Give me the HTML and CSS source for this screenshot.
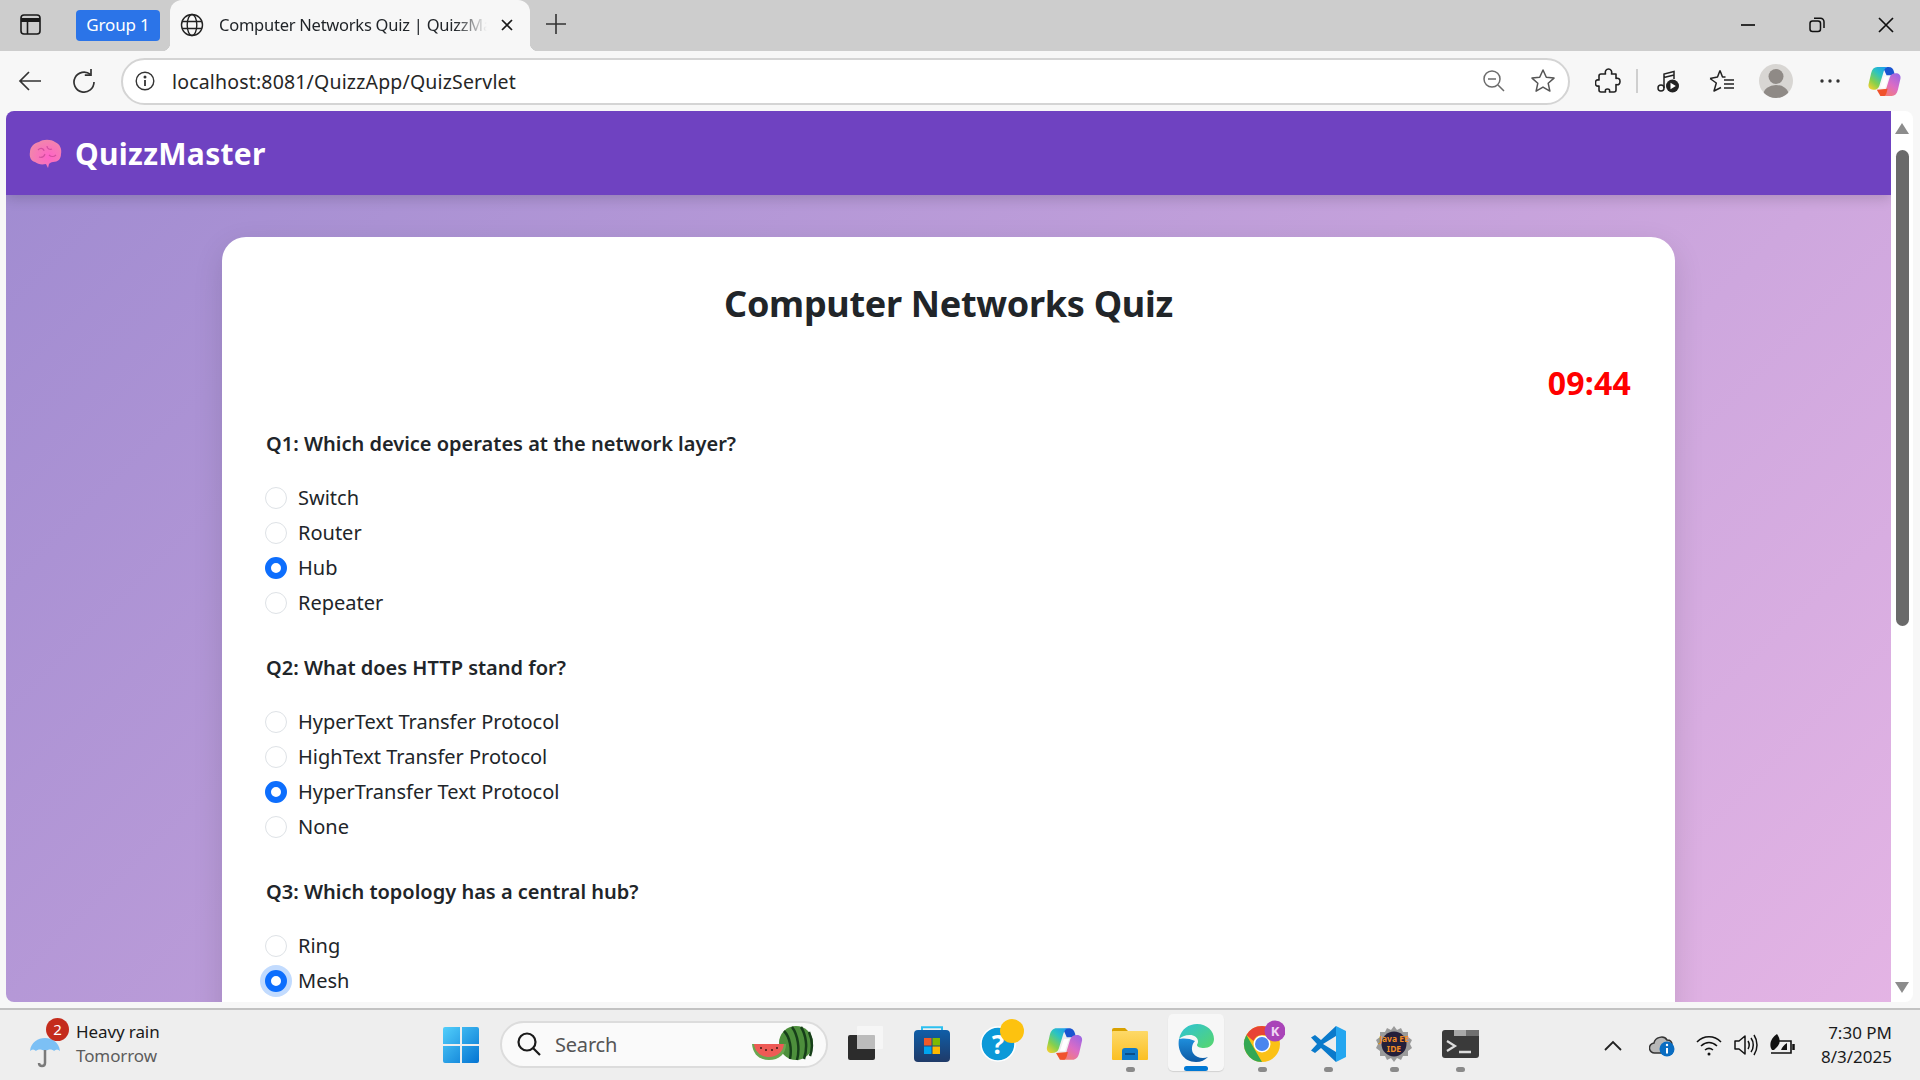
FILE: index.html
```html
<!DOCTYPE html>
<html lang="en">
<head>
    <meta charset="UTF-8">
    <title>Computer Networks Quiz | QuizzMaster</title>
    <link rel="stylesheet" href="styles.css">
</head>
<body>
    <svg width="0" height="0" class="defs">
        <defs>
            <linearGradient id="copilotA" x1=".85" y1="0" x2=".1" y2="1">
                <stop offset="0" stop-color="#1c9cf0"/><stop offset=".35" stop-color="#2cc4c0"/><stop offset=".7" stop-color="#86d04c"/><stop offset="1" stop-color="#f6d02e"/>
            </linearGradient>
            <linearGradient id="copilotB" x1=".9" y1="0" x2=".2" y2="1">
                <stop offset="0" stop-color="#9a66e6"/><stop offset=".5" stop-color="#dc6cc4"/><stop offset="1" stop-color="#f7806a"/>
            </linearGradient>
            <linearGradient id="edgeA" x1="0" y1="0" x2="1" y2="1">
                <stop offset="0" stop-color="#2dc3d8"/><stop offset="1" stop-color="#58d66b"/>
            </linearGradient>
            <linearGradient id="edgeB" x1="0" y1="0" x2="0" y2="1">
                <stop offset="0" stop-color="#1f8fdc"/><stop offset="1" stop-color="#0c59a4"/>
            </linearGradient>
            <linearGradient id="winLogo" x1="0" y1="0" x2="1" y2="1">
                <stop offset="0" stop-color="#52cffb"/><stop offset="1" stop-color="#0474d2"/>
            </linearGradient>
            <linearGradient id="storeBag" x1="0" y1="0" x2="0" y2="1">
                <stop offset="0" stop-color="#0f5ea8"/><stop offset="1" stop-color="#1f3a68"/>
            </linearGradient>
            <linearGradient id="folderFill" x1="0" y1="0" x2="0" y2="1">
                <stop offset="0" stop-color="#fdd968"/><stop offset="1" stop-color="#fbbf24"/>
            </linearGradient>
            <radialGradient id="brainFill" cx=".6" cy=".6" r=".7">
                <stop offset="0" stop-color="#ff62c8"/><stop offset="1" stop-color="#f08aa8"/>
            </radialGradient>
            <symbol id="copilot" viewBox="0 0 32 30">
                <path d="M15 2.500C16.500 1 18.500 1 20 1c3 0 4.500 2 5.200 4.500L26 9h-8z" fill="#1a55d0"/>
                <path d="M23 29H11c3 0 5-2 6-5l4-13c1-3 3-4 6-4s5 2 4.500 5L29 23c-1 4-3 6-6 6z" fill="url(#copilotB)"/>
                <path d="M8.500 23l3.500 6h4c1.500-1 2-3 2.500-5l.5-2z" fill="#f0522c"/>
                <path d="M9 1h11c-3 0-4 2-5 5l-4 13c-1 3-3 4-6 4s-5-2-4.500-5L3 7c1-4 3-6 6-6z" fill="url(#copilotA)"/>
                <path d="M15.500 10.500H20L16.500 21H12z" fill="#fff"/>
            </symbol>
        </defs>
    </svg>

    <div class="tabstrip">
        <div class="strip-slot sidebar-slot">
            <svg width="21" height="21" viewBox="0 0 21 21" fill="none" stroke="#1a1a1a" stroke-width="1.600"><rect x="1" y="1" width="19" height="19" rx="3"/><path d="M1 6h19" stroke-width="4"/><path d="M7.500 6v14"/></svg>
        </div>
        <div class="group-chip">Group 1</div>
        <div class="tab">
            <svg width="24" height="24" viewBox="0 0 24 24" fill="none" stroke="#222" stroke-width="1.400"><circle cx="12" cy="12" r="10.500"/><ellipse cx="12" cy="12" rx="4.800" ry="10.500"/><path d="M2 8.500h20M2 15.500h20"/></svg>
            <span class="tab-title">Computer Networks Quiz | QuizzMaster</span>
            <svg class="tab-close" width="14" height="14" viewBox="0 0 14 14" stroke="#1a1a1a" stroke-width="1.700"><path d="M2 2l10 10M12 2L2 12"/></svg>
        </div>
        <div class="strip-slot plus-slot">
            <svg width="22" height="22" viewBox="0 0 22 22" stroke="#333" stroke-width="1.600"><path d="M11 1v20M1 11h20"/></svg>
        </div>
        <div class="win-controls">
            <div class="win-btn"><svg width="16" height="16" viewBox="0 0 16 16" stroke="#111" stroke-width="1.700"><path d="M1 8h14"/></svg></div>
            <div class="win-btn"><svg width="16" height="16" viewBox="0 0 16 16" fill="none" stroke="#111" stroke-width="1.500"><rect x="1" y="4" width="10.500" height="10.500" rx="2.500"/><path d="M5 1.200h6.500a3.500 3.500 0 0 1 3.500 3.500V11"/></svg></div>
            <div class="win-btn"><svg width="16" height="16" viewBox="0 0 16 16" stroke="#111" stroke-width="1.700"><path d="M1 1l14 14M15 1L1 15"/></svg></div>
        </div>
    </div>

    <div class="toolbar">
        <div class="tool">
            <svg width="24" height="22" viewBox="0 0 24 22" fill="none" stroke="#333" stroke-width="1.700"><path d="M23 11H2M11 2l-9 9 9 9"/></svg>
        </div>
        <div class="tool">
            <svg width="24" height="26" viewBox="0 0 24 26" fill="none" stroke="#333" stroke-width="1.700"><path d="M18.500 6.500A10 10 0 1 0 22 14"/><path d="M19 1v6.200h-6.200"/></svg>
        </div>
        <div class="address">
            <svg width="20" height="20" viewBox="0 0 20 20" fill="none" stroke="#333" stroke-width="1.400"><circle cx="10" cy="10" r="8.800"/><path d="M10 9v6" stroke-width="1.800"/><circle cx="10" cy="6" r=".8" fill="#333"/></svg>
            <span class="url">localhost:8081/QuizzApp/QuizServlet</span>
            <svg class="addr-zoom" width="24" height="24" viewBox="0 0 24 24" fill="none" stroke="#6b6b6b" stroke-width="1.500"><circle cx="10" cy="10" r="8"/><path d="M6 10h8M16 16l6 6"/></svg>
            <svg class="addr-star" width="26" height="26" viewBox="0 0 26 26" fill="none" stroke="#555" stroke-width="1.500" stroke-linejoin="round"><path d="M13 2l3.300 7.300 7.700.8-5.800 5.200 1.700 7.800L13 19.100 6.100 23.100l1.700-7.800L2 10.100l7.700-.8z"/></svg>
        </div>
        <div class="tool tool-puzzle">
            <svg width="26" height="26" viewBox="0 0 26 26" fill="none" stroke="#222" stroke-width="1.600" stroke-linejoin="round"><path d="M6 6h4.500c-.8-3 .8-5 3-5s3.800 2 3 5H21v4.500c3-.8 4 1 4 3s-1 3.800-4 3V22a2 2 0 0 1-2 2h-4.500c.5-2.500-.5-3-2-3s-2.500.5-2 3H6a2 2 0 0 1-2-2v-4c-3 .5-3.500-1-3.500-3s.5-3.500 3.500-3V8a2 2 0 0 1 2-2z"/></svg>
        </div>
        <div class="tool-divider"></div>
        <div class="tool">
            <svg width="22" height="24" viewBox="0 0 22 24" fill="none" stroke="#222" stroke-width="1.500"><circle cx="4" cy="19" r="3"/><path d="M7 19V5l10-2.500V10M7 8.500l10-2.500"/><circle cx="15.500" cy="17" r="6.500" fill="#222" stroke="none"/><path d="M13.500 13.800l5.300 3.200-5.300 3.200z" fill="#fff" stroke="none"/></svg>
        </div>
        <div class="tool">
            <svg width="26" height="24" viewBox="0 0 26 24" fill="none" stroke="#222" stroke-width="1.500" stroke-linejoin="round"><path d="M11 1.500l2.500 6.500h3M1 9.500l6.300 4.500L5 22l7-3.500M1 9.500L8.500 8 11 1.500M15 11h10M15 15h10M15 19h10"/></svg>
        </div>
        <div class="tool">
            <div class="avatar">
                <svg width="34" height="34" viewBox="0 0 34 34"><circle cx="17" cy="12.500" r="7.500" fill="#8f8a86"/><ellipse cx="17" cy="30" rx="12.500" ry="9" fill="#8f8a86"/></svg>
            </div>
        </div>
        <div class="tool">
            <svg width="20" height="4" viewBox="0 0 20 4" fill="#333"><circle cx="2" cy="2" r="1.700"/><circle cx="10" cy="2" r="1.700"/><circle cx="18" cy="2" r="1.700"/></svg>
        </div>
        <div class="tool">
            <svg width="33" height="31"><use href="#copilot"/></svg>
        </div>
    </div>

    <div class="viewport">
        <div class="page-frame">
            <nav class="navbar">
                <svg class="brain" width="34" height="32" viewBox="0 0 34 32"><path d="M10 3c4-3 12-3 16 0 5 2 7 7 6 12 0 5-3 8-8 8-2 0-3 1-4 2l-1 4-2-4c-5 1-8 0-11-2-4-1-6-5-5-10 0-5 4-9 9-10z" fill="url(#brainFill)"/><path d="M9 11c3-3 6-1 6 1M18 7c0 3 3 4 5 3M10 18c3 1 5 0 6-3M20 16c2 2 5 2 7 0" fill="none" stroke="#d34f9f" stroke-width="1.200"/></svg>
                <span class="brand">QuizzMaster</span>
            </nav>
            <main class="page">
                <div class="quiz-card">
                    <h2 class="quiz-title">Computer Networks Quiz</h2>
                    <div class="timer">09:44</div>

                    <section class="question">
                        <h5>Q1: Which device operates at the network layer?</h5>
                        <label class="option"><input type="radio" name="q1"><span>Switch</span></label>
                        <label class="option"><input type="radio" name="q1"><span>Router</span></label>
                        <label class="option"><input type="radio" name="q1" checked><span>Hub</span></label>
                        <label class="option"><input type="radio" name="q1"><span>Repeater</span></label>
                    </section>

                    <section class="question">
                        <h5>Q2: What does HTTP stand for?</h5>
                        <label class="option"><input type="radio" name="q2"><span>HyperText Transfer Protocol</span></label>
                        <label class="option"><input type="radio" name="q2"><span>HighText Transfer Protocol</span></label>
                        <label class="option"><input type="radio" name="q2" checked><span>HyperTransfer Text Protocol</span></label>
                        <label class="option"><input type="radio" name="q2"><span>None</span></label>
                    </section>

                    <section class="question">
                        <h5>Q3: Which topology has a central hub?</h5>
                        <label class="option"><input type="radio" name="q3"><span>Ring</span></label>
                        <label class="option"><input type="radio" name="q3" class="focused" checked><span>Mesh</span></label>
                    </section>
                </div>
            </main>
        </div>
        <div class="scrollbar">
            <div class="arrow-up"></div>
            <div class="thumb"></div>
            <div class="arrow-down"></div>
        </div>
    </div>

    <div class="taskbar">
        <div class="weather">
            <div class="weather-icon">
                <svg width="34" height="36" viewBox="0 0 34 36"><path d="M2 18C3 9 10 5 17 5s14 4 15 13c-2-2-4-2-6 0-2-2-5-2-9 0-4-2-7-2-9 0-2-2-4-2-6 0z" fill="#7cc0f5"/><path d="M17 17v13c0 4-6 4-6 0" fill="none" stroke="#7a7a7a" stroke-width="2.500"/></svg>
                <span class="weather-badge">2</span>
            </div>
            <div class="weather-text">
                <div>Heavy rain</div>
                <div class="weather-sub">Tomorrow</div>
            </div>
        </div>
        <svg class="start" width="36" height="36" viewBox="0 0 36 36" fill="url(#winLogo)"><path d="M0 2a2 2 0 0 1 2-2h15v17H0zM19 0h15a2 2 0 0 1 2 2v15H19zM0 19h17v17H2a2 2 0 0 1-2-2zM19 19h17v15a2 2 0 0 1-2 2H19z"/></svg>
        <div class="search">
            <svg width="26" height="26" viewBox="0 0 26 26" fill="none" stroke="#1a1a1a" stroke-width="2.200"><circle cx="11" cy="11" r="8.500"/><path d="M17 17l7 7"/></svg>
            <span class="search-text">Search</span>
            <svg class="melon" width="62" height="36" viewBox="0 0 62 36">
                <circle cx="44" cy="17" r="17" fill="#4d8f3c"/>
                <path d="M32 5c6 6 8 18 6 28M40 1c6 8 8 22 5 33M49 1c5 8 7 20 3 32M57 6c3 7 4 16 1 24" fill="none" stroke="#173f1a" stroke-width="2.500"/>
                <path d="M0 18h34c0 10-7 16-17 16S1 28 0 18z" fill="#6aa650"/>
                <path d="M2 18h30c-1 8-7 13-15 13S3 26 2 18z" fill="#ee5a55"/>
                <g fill="#3a1a14"><circle cx="9" cy="22" r="1"/><circle cx="14" cy="24" r="1"/><circle cx="20" cy="24" r="1"/><circle cx="25" cy="22" r="1"/></g>
            </svg>
        </div>
        <div class="apps">
            <div class="app">
                <svg width="36" height="36" viewBox="0 0 36 36"><rect x="0" y="9" width="27" height="25" rx="2" fill="#2c2c2c"/><rect x="9" y="0" width="26" height="23" rx="1" fill="#f6f6f6" opacity=".9"/><rect x="9" y="9" width="18" height="14" rx="1" fill="#bcbcbc"/></svg>
            </div>
            <div class="app">
                <svg width="36" height="36" viewBox="0 0 36 36"><path d="M8 5V1.200h20V5" fill="none" stroke="#2cc0f0" stroke-width="2"/><rect x="0" y="4" width="36" height="32" rx="4" fill="url(#storeBag)"/><rect x="10" y="12" width="7.500" height="7.500" fill="#f05a28"/><rect x="18.500" y="12" width="7.500" height="7.500" fill="#7fba00"/><rect x="10" y="20.500" width="7.500" height="7.500" fill="#00a4ef"/><rect x="18.500" y="20.500" width="7.500" height="7.500" fill="#ffb900"/></svg>
            </div>
            <div class="app">
                <svg width="52" height="52" viewBox="-8 0 52 52"><circle cx="18" cy="26" r="17" fill="#0c99d8" stroke="#fff" stroke-width="1.500"/><text x="18" y="36" class="help-mark">?</text><circle cx="32" cy="13" r="12" fill="#fdc20f"/></svg>
            </div>
            <div class="app"><svg width="37" height="34"><use href="#copilot"/></svg></div>
            <div class="app">
                <svg width="38" height="34" viewBox="0 0 38 34"><path d="M1 3a2 2 0 0 1 2-2h11l4 4h-17z" fill="#d9a100"/><rect x="1" y="4" width="36" height="29" rx="1" fill="url(#folderFill)"/><path d="M11 33v-9a3 3 0 0 1 3-3h10a3 3 0 0 1 3 3v9z" fill="#0f79c9"/><path d="M14 27h10" stroke="#0a4e8a" stroke-width="2"/></svg>
                <i class="app-dot"></i>
            </div>
            <div class="app app-active">
                <svg width="38" height="40" viewBox="0 0 38 40"><path d="M2 16C4 6 12 1 20 1c10 0 17 7 17 15 0 6-5 9-10 9-4 0-7-1-7-3 0-1 1-1.500 1-3.500 0-4-4-6.500-8-6.500-5 0-9 2-11 4z" fill="url(#edgeA)"/><path d="M2 16c-2 11 4 23 17 23 5 0 9-2 12-5-5 2-12 1-15-4-2-4-1-9 2-12-5-3-13-3-16-2z" fill="url(#edgeB)"/></svg>
                <i class="app-bar"></i>
            </div>
            <div class="app">
                <svg width="46" height="52" viewBox="-4 -1 46 52"><circle cx="19" cy="25" r="18" fill="#fbc116"/><path d="M19 7a18 18 0 0 1 15.600 9H19a9 9 0 0 0-8.500 6L3.400 16A18 18 0 0 1 19 7z" fill="#e84335"/><path d="M3.400 16L12 31l7 12a18 18 0 0 1-15.600-27z" fill="#34a853"/><circle cx="19" cy="25" r="8.500" fill="#fff"/><circle cx="19" cy="25" r="7" fill="#4a86ee"/><circle cx="32" cy="12" r="10.500" fill="#a944b8"/><text x="32" y="17" class="chrome-k">K</text></svg>
                <i class="app-dot"></i>
            </div>
            <div class="app">
                <svg width="36" height="36" viewBox="0 0 36 36"><path d="M26 10L13 18l13 8v10L11 22l-6 5-4-2.500L7 18 1 11.500 5 9l6 5L26 0z" fill="#0a7acb"/><path d="M26 0l10 5v26l-10 5z" fill="#24a6f0"/></svg>
                <i class="app-dot"></i>
            </div>
            <div class="app">
                <svg width="38" height="38" viewBox="0 0 38 38"><path d="M19 1l3 4 4-2 2 4 5 0 0 5 4 3-2 4 2 4-4 3 0 5-5 0-2 4-4-2-3 4-3-4-4 2-2-4-5 0 0-5-4-3 2-4-2-4 4-3 0-5 5 0 2-4 4 2z" fill="#9a9a9a"/><circle cx="19" cy="19" r="12.500" fill="#241f3a"/><text x="19" y="17" class="ide-line">Java EE</text><text x="19" y="27" class="ide-line">IDE</text></svg>
                <i class="app-dot"></i>
            </div>
            <div class="app">
                <svg width="37" height="28" viewBox="0 0 37 28"><rect width="37" height="28" rx="3" fill="#3a3a3a"/><rect x="12" width="12" height="6" fill="#a8a8a8"/><rect x="24" width="13" height="6" fill="#707070"/><path d="M5 11l8 5-8 5" fill="none" stroke="#ddd" stroke-width="2.200"/><path d="M17 22h12" stroke="#ddd" stroke-width="2.500"/></svg>
                <i class="app-dot"></i>
            </div>
        </div>
        <div class="tray">
            <svg class="tray-caret" width="18" height="11" viewBox="0 0 18 11" fill="none" stroke="#222" stroke-width="1.800"><path d="M1 10l8-8 8 8"/></svg>
            <svg class="tray-cloud" width="26" height="24" viewBox="0 0 26 24"><path d="M6 20a5 5 0 0 1-1-10c1-6 10-8 13-3 3 0 5 2 5 5v8z" fill="#b8b8b8" stroke="#333" stroke-width="1.500"/><circle cx="18" cy="16" r="7.500" fill="#0a6dc2"/><path d="M18 15v5.500" stroke="#fff" stroke-width="2"/><circle cx="18" cy="12" r="1.200" fill="#fff"/></svg>
            <svg class="tray-wifi" width="26" height="22" viewBox="0 0 26 22" fill="none" stroke="#111" stroke-width="1.600"><path d="M1 8c7-7 17-7 24 0M5 12c5-4.500 11-4.500 16 0M9 16c2.500-2 5.500-2 8 0"/><circle cx="13" cy="20" r="1.500" fill="#111" stroke="none"/></svg>
            <svg class="tray-sound" width="25" height="24" viewBox="0 0 25 24" fill="none" stroke="#111" stroke-width="1.500" stroke-linejoin="round"><path d="M2 8h4l6-5v18l-6-5H2zM15 8c1.500 2.500 1.500 5.500 0 8M18 5c3 4 3 10 0 14M21 2c4 6 4 14 0 20"/></svg>
            <svg class="tray-battery" width="28" height="24" viewBox="0 0 28 24" fill="none" stroke="#111" stroke-width="1.600"><path d="M10 8h13v12H3"/><path d="M25.500 11v6" stroke-width="2.500"/><path d="M4 17C0 11 4 4 9 1c3 4 4 9 0 13l-3 3z" fill="#111" stroke="none"/><path d="M13 17c1-3 3-5 6-7v7z" fill="#111" stroke="none"/></svg>
            <div class="clock">
                <div>7:30 PM</div>
                <div>8/3/2025</div>
            </div>
        </div>
    </div>
</body>
</html>
```

FILE: styles.css
```css
* {
    box-sizing: border-box;
}

html,
body {
    height: 100%;
}

body {
    margin: 0;
    display: flex;
    flex-direction: column;
    height: 100vh;
    overflow: hidden;
    background: #f7f7f7;
    font-family: "Noto Sans", "Open Sans", sans-serif;
    color: #212529;
}

.defs {
    position: absolute;
}

/* browser chrome */
.tabstrip {
    flex: 0 0 51px;
    display: flex;
    align-items: stretch;
    background: #cdcdcd;
}

.strip-slot {
    display: flex;
    align-items: center;
    justify-content: center;
    padding-bottom: 3px;
}

.sidebar-slot {
    width: 61px;
}

.group-chip {
    width: 84px;
    height: 31px;
    margin: 10px 0 0 15px;
    border-radius: 4px;
    background: #2b74e8;
    color: #fff;
    font-size: 17px;
    line-height: 30px;
    text-align: center;
    letter-spacing: -0.15px;
}

.tab {
    position: relative;
    width: 360px;
    margin-left: 10px;
    display: flex;
    align-items: center;
    padding: 0 16px 2px 10px;
    background: #f7f7f7;
    border-radius: 12px 12px 0 0;
}

.tab::before,
.tab::after {
    content: "";
    position: absolute;
    bottom: 0;
    width: 8px;
    height: 8px;
}

.tab::before {
    left: -8px;
    background: radial-gradient(circle at 0 0, #cdcdcd 8px, #f7f7f7 8.5px);
}

.tab::after {
    right: -8px;
    background: radial-gradient(circle at 100% 0, #cdcdcd 8px, #f7f7f7 8.5px);
}

.tab-title {
    flex: 1;
    margin-left: 15px;
    padding-bottom: 1px;
    overflow: hidden;
    white-space: nowrap;
    font-size: 16.5px;
    letter-spacing: -0.25px;
    -webkit-mask-image: linear-gradient(to right, #000 88%, transparent 100%);
    mask-image: linear-gradient(to right, #000 88%, transparent 100%);
}

.tab-close {
    margin-left: 13px;
}

.plus-slot {
    width: 52px;
}

.win-controls {
    margin-left: auto;
    display: flex;
    padding-bottom: 2px;
}

.win-btn {
    width: 69px;
    display: flex;
    align-items: center;
    justify-content: center;
}

.toolbar {
    flex: 0 0 60px;
    display: flex;
    align-items: center;
    gap: 10px;
    padding-left: 8px;
    background: #f7f7f7;
}

.tool {
    width: 44px;
    height: 44px;
    flex: none;
    display: flex;
    align-items: center;
    justify-content: center;
}

.tool-puzzle {
    margin-left: 6px;
}

.tool-divider {
    width: 2px;
    height: 24px;
    margin: 0 -2px 0 -4px;
    background: #cfcfcf;
}

.address {
    width: 1449px;
    height: 47px;
    flex: none;
    margin-left: 5px;
    display: flex;
    align-items: center;
    padding-left: 12px;
    background: #fff;
    border: 2px solid #d4d4d4;
    border-radius: 24px;
}

.url {
    margin-left: 17px;
    font-size: 19.5px;
    letter-spacing: 0.17px;
    color: #262626;
}

.addr-zoom {
    margin-left: auto;
}

.addr-star {
    margin: 0 12px 0 24px;
}

.avatar {
    width: 34px;
    height: 34px;
    border-radius: 50%;
    overflow: hidden;
    background: #d8d6d3;
}

.avatar svg {
    display: block;
}

/* page */
.viewport {
    flex: 1;
    min-height: 0;
    display: flex;
    margin: 0 7px 6px 6px;
}

.page-frame {
    flex: 1;
    min-width: 0;
    display: flex;
    flex-direction: column;
    overflow: hidden;
    border-radius: 8px 0 0 8px;
}

.navbar {
    flex: 0 0 84px;
    position: relative;
    z-index: 1;
    display: flex;
    align-items: center;
    gap: 12px;
    padding-left: 23px;
    background: #6f42c1;
    box-shadow: 0 4px 12px rgba(0, 0, 0, 0.15);
}

.brain {
    margin-top: 3px;
}

.brand {
    margin-top: 1px;
    font-size: 30px;
    font-weight: 700;
    letter-spacing: 0.3px;
    color: #fff;
}

.page {
    height: 1750px;
    flex: none;
    padding: 42px 216px 0 216px;
    background: linear-gradient(135deg, #a18cd1, #fbc2eb);
}

.quiz-card {
    height: 1600px;
    padding: 43px 44px;
    background: #fff;
    border-radius: 24px;
    box-shadow: 0 10px 30px rgba(0, 0, 0, 0.12);
}

.quiz-title {
    margin: 0;
    font-size: 36px;
    line-height: 48px;
    font-weight: 700;
    letter-spacing: -0.3px;
    text-align: center;
}

.timer {
    margin: 31px 0 22px;
    font-size: 32px;
    line-height: 48px;
    font-weight: 700;
    letter-spacing: 0.2px;
    color: #f00;
    text-align: right;
}

.question {
    margin-bottom: 33px;
}

.question h5 {
    margin: 0 0 21px;
    font-size: 20px;
    line-height: 30px;
    font-weight: 600;
    letter-spacing: 0;
}

.option {
    height: 35px;
    display: flex;
    align-items: center;
    gap: 11px;
    font-size: 20px;
    letter-spacing: 0;
}

.option input {
    appearance: none;
    -webkit-appearance: none;
    width: 22px;
    height: 22px;
    margin: 0 0 0 -1px;
    flex: none;
    background: #fff;
    border: 1px solid #dee2e6;
    border-radius: 50%;
}

.option input:checked {
    background: #fff;
    border: 6px solid #0d6efd;
}

.option input.focused {
    box-shadow: 0 0 0 5px rgba(13, 110, 253, 0.25);
}

.scrollbar {
    flex: 0 0 22px;
    display: flex;
    flex-direction: column;
    align-items: center;
    padding: 12px 0 9px;
    background: #fff;
    border-radius: 0 8px 8px 0;
}

.arrow-up,
.arrow-down {
    width: 0;
    height: 0;
    border-left: 7.5px solid transparent;
    border-right: 7.5px solid transparent;
}

.arrow-up {
    border-bottom: 11px solid #8c8c8c;
}

.arrow-down {
    margin-top: auto;
    border-top: 11px solid #8c8c8c;
}

.thumb {
    width: 13px;
    height: 476px;
    margin-top: 16px;
    background: #6a6a6a;
    border-radius: 7px;
}

/* taskbar */
.taskbar {
    flex: 0 0 72px;
    display: flex;
    align-items: center;
    background: #eeeeee;
    border-top: 2px solid #c2c2c2;
}

.weather {
    width: 443px;
    flex: none;
    display: flex;
    align-items: center;
    padding-left: 28px;
}

.weather-icon {
    position: relative;
    width: 48px;
    height: 36px;
    margin-top: 12px;
}

.weather-badge {
    position: absolute;
    top: -15px;
    left: 18px;
    width: 23px;
    height: 23px;
    border-radius: 50%;
    background: #c42b1c;
    color: #fff;
    font-size: 15px;
    line-height: 23px;
    text-align: center;
}

.weather-text {
    margin-bottom: 2px;
    font-size: 17px;
    line-height: 24px;
    letter-spacing: -0.1px;
    color: #1a1a1a;
}

.weather-sub {
    color: #5c5c5c;
}

.start {
    flex: none;
}

.search {
    width: 328px;
    height: 47px;
    flex: none;
    margin: 0 0 2px 21px;
    display: flex;
    align-items: center;
    padding: 0 12px 0 14px;
    background: #fafafa;
    border: 2px solid #dcdcdc;
    border-radius: 24px;
}

.search-text {
    margin-left: 13px;
    font-size: 20px;
    color: #555;
    letter-spacing: -0.2px;
}

.melon {
    margin-left: auto;
}

.apps {
    display: flex;
    margin-left: 5px;
}

.app {
    position: relative;
    width: 66px;
    height: 62px;
    display: flex;
    align-items: center;
    justify-content: center;
    padding-bottom: 2px;
}

.app-active {
    height: 57px;
    width: 56px;
    margin: 0 5px;
    padding-bottom: 0;
    background: #f7f7f7;
    border-radius: 5px;
    box-shadow: 0 1px 1px rgba(0, 0, 0, 0.12);
}

.app-dot,
.app-bar {
    position: absolute;
    left: 50%;
    height: 5px;
    border-radius: 3px;
}

.app-dot {
    bottom: 4px;
    width: 9px;
    margin-left: -4.5px;
    background: #8a8a8a;
}

.app-bar {
    bottom: 0;
    width: 24px;
    margin-left: -12px;
    background: #0078d4;
}

.help-mark {
    font-size: 26px;
    font-weight: 700;
    fill: #fff;
    text-anchor: middle;
}

.chrome-k {
    font-size: 13px;
    font-weight: 700;
    fill: #f0d7f4;
    text-anchor: middle;
}

.ide-line {
    font-size: 8.5px;
    font-weight: 700;
    fill: #f08a24;
    text-anchor: middle;
}

.tray {
    margin-left: auto;
    display: flex;
    align-items: center;
    padding-right: 28px;
}

.tray-caret {
    margin-right: 27px;
}

.tray-cloud {
    margin-right: 21px;
}

.tray-wifi {
    margin-right: 11px;
}

.tray-sound {
    margin-right: 10px;
}

.clock {
    margin-left: 25px;
    font-size: 17px;
    line-height: 24px;
    text-align: right;
    color: #1a1a1a;
}
```
